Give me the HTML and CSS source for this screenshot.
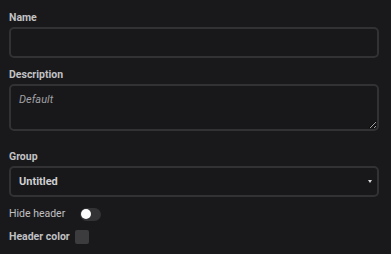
FILE: index.html
```html
<!DOCTYPE html>
<html lang="en">
<head>
  <meta charset="UTF-8">
  <meta name="viewport" content="width=device-width, initial-scale=1.0">
  <title>Panel options</title>
  <link rel="stylesheet" href="styles.css">
</head>
<body>
  <form class="options-form">
    <div class="field">
      <label class="field-label" for="name">Name</label>
      <input type="text" id="name" class="text-input">
    </div>

    <div class="field">
      <label class="field-label" for="description">Description</label>
      <textarea id="description" class="text-area" placeholder="Default"></textarea>
    </div>

    <div class="field field-group">
      <label class="field-label" for="group">Group</label>
      <div class="select-wrap">
        <select id="group" class="select-input">
          <option>Untitled</option>
        </select>
        <span class="select-arrow"></span>
      </div>
    </div>

    <div class="inline-field">
      <span class="inline-label">Hide header</span>
      <span class="toggle"><span class="toggle-knob"></span></span>
    </div>

    <div class="inline-field">
      <span class="inline-label bold">Header color</span>
      <span class="color-box"></span>
    </div>
  </form>
</body>
</html>
```

FILE: styles.css
```css
body {
  margin: 0;
  padding: 11px 12px 0 9px;
  background: #19191b;
  color: #b9b9bc;
  font-family: Roboto, 'Liberation Sans', sans-serif;
  font-size: 10.5px;
}

.options-form {
  display: flex;
  flex-direction: column;
}

.field {
  display: flex;
  flex-direction: column;
  margin-bottom: 10px;
}

.field-group {
  margin-top: 9px;
}

.field-label {
  font-weight: 700;
  line-height: 14px;
  margin-bottom: 2px;
  color: #c2c2c5;
}

.text-input,
.text-area,
.select-input {
  box-sizing: border-box;
  width: 100%;
  margin: 0;
  background: #18181a;
  border: 2px solid #323235;
  border-radius: 5px;
  color: #c8c8cb;
  font-family: inherit;
  outline: none;
}

.text-input {
  height: 31px;
}

.text-area {
  display: block;
  height: 47px;
  padding: 7px 8px;
  font-size: 11px;
  resize: vertical;
}

.text-area::placeholder {
  color: #a0a0a4;
  font-style: italic;
}

.select-wrap {
  position: relative;
}

.select-input {
  display: block;
  height: 31px;
  padding: 0 8px;
  font-size: 11px;
  font-weight: 700;
  color: #cfcfd2;
  appearance: none;
  -webkit-appearance: none;
}

.select-arrow {
  position: absolute;
  right: 7px;
  top: 14px;
  width: 0;
  height: 0;
  border-left: 2.5px solid transparent;
  border-right: 2.5px solid transparent;
  border-top: 3px solid #d8d8da;
}

.inline-field {
  display: flex;
  align-items: center;
  height: 14px;
  margin-bottom: 9px;
}

.inline-label {
  line-height: 14px;
  color: #c0c0c3;
}

.bold {
  font-weight: 700;
}

.toggle {
  display: flex;
  align-items: center;
  width: 21px;
  height: 13px;
  margin-left: 15px;
  padding: 0 1px;
  box-sizing: border-box;
  border-radius: 7px;
  background: #333336;
}

.toggle-knob {
  width: 10px;
  height: 10px;
  border-radius: 50%;
  background: #ffffff;
}

.color-box {
  width: 14px;
  height: 14px;
  margin-left: 5px;
  border-radius: 2px;
  background: #3c3c3f;
}
```
